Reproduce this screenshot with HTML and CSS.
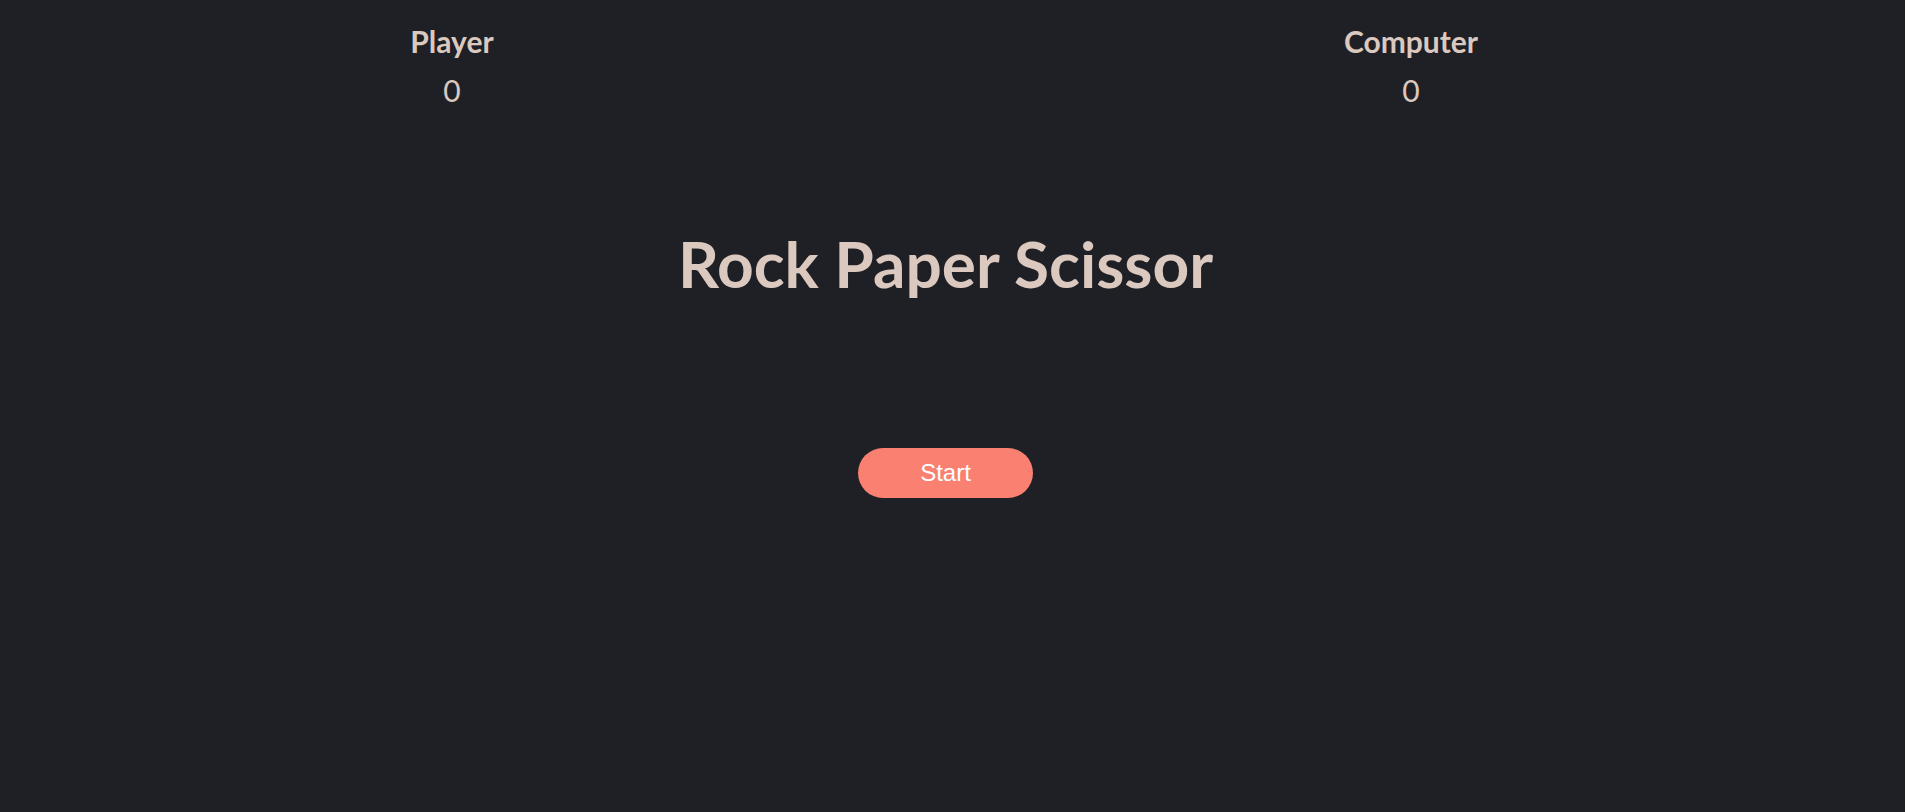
FILE: index.html
```html
<!DOCTYPE html>
<html lang="en">
<head>
<meta charset="utf-8">
<title>Rock Paper Scissor</title>
<link rel="stylesheet" href="styles.css">
</head>
<body>
<main class="game">
  <header class="scoreboard">
    <div class="score-card">
      <h2 class="score-name">Player</h2>
      <p class="score-value">0</p>
    </div>
    <div class="score-card">
      <h2 class="score-name">Computer</h2>
      <p class="score-value">0</p>
    </div>
  </header>
  <h1 class="title">Rock Paper Scissor</h1>
  <div class="actions">
    <button class="start-btn" type="button">Start</button>
  </div>
</main>
</body>
</html>
```

FILE: styles.css
```css
html, body {
  margin: 0;
  padding: 0;
}

body {
  background: #1f2026;
  color: #dbc8be;
  font-family: Lato, "Open Sans", sans-serif;
  min-height: 812px;
}

.game {
  display: flex;
  flex-direction: column;
}

.scoreboard {
  display: flex;
  justify-content: space-between;
  padding: 23px 394px 0 352px;
}

.score-card {
  width: 200px;
  display: flex;
  flex-direction: column;
  align-items: center;
  gap: 13px;
}

.score-name {
  margin: 0;
  font-size: 30px;
  line-height: 36px;
  font-weight: 700;
}

.score-value {
  margin: 0;
  font-size: 30px;
  line-height: 36px;
  font-weight: 400;
}

.title {
  margin: 117px 0 0;
  padding-right: 14px;
  text-align: center;
  font-size: 64px;
  line-height: 77px;
  font-weight: 700;
}

.actions {
  display: flex;
  justify-content: center;
  padding-right: 14px;
  margin-top: 146px;
}

.start-btn {
  border: none;
  border-radius: 25px;
  background: #fa8072;
  color: #ffffff;
  font-family: "Liberation Sans", Arial, sans-serif;
  font-size: 24px;
  line-height: 28px;
  width: 175px;
  padding: 11px 0;
  cursor: pointer;
}
```
